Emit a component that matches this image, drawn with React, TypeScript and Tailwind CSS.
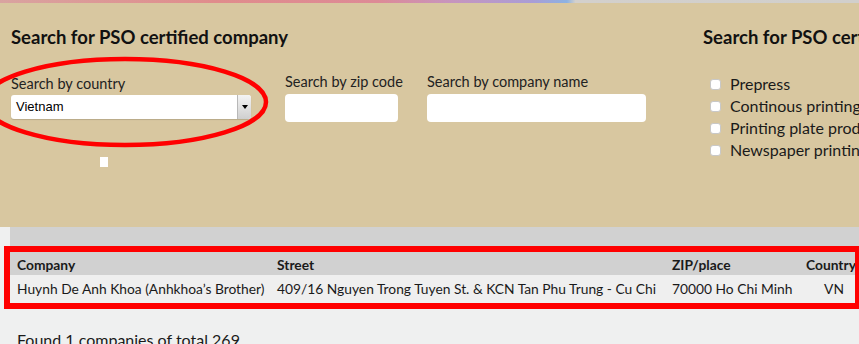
const rows = [
  {
    company: "Huynh De Anh Khoa (Anhkhoa’s Brother)",
    street: "409/16 Nguyen Trong Tuyen St. & KCN Tan Phu Trung - Cu Chi",
    zip: "70000 Ho Chi Minh",
    country: "VN",
  },
];

const processes = [
  "Prepress",
  "Continous printing",
  "Printing plate production",
  "Newspaper printing",
];

function Field({ label, width }: { label: string; width: string }) {
  return (
    <div className={`${width} flex flex-col shrink-0`}>
      <div className="text-[14.5px] leading-[17px] text-[#222] whitespace-nowrap">{label}</div>
      <div className="w-full mt-[4px] h-[28px] rounded-[4px] bg-white" />
    </div>
  );
}

export default function App() {
  return (
    <div
      className="relative w-[859px] h-[344px] overflow-hidden bg-[#eff0f0] text-[#1a1a1a]"
      style={{ fontFamily: "Lato, 'Open Sans', sans-serif" }}
    >
      {/* banner image strip */}
      <div className="h-[3px] bg-[linear-gradient(90deg,#d9a3a0_0%,#e08c8c_25%,#dd8a96_44%,#c894bc_52%,#a99dd6_62%,#8cb2e2_66%,#d3d0cc_67%,#d1cfcc_100%)]" />

      {/* search panel */}
      <div className="h-[224px] bg-[#d8c7a0] flex">
        <div className="w-[692px] shrink-0 pl-[11px] pt-[23px]">
          <h2 className="text-[18.5px] leading-[22px] font-bold text-[#111] whitespace-nowrap">
            Search for PSO certified company
          </h2>
          <div className="flex items-start mt-[25px]">
            <div className="flex flex-col w-[240px] shrink-0 pt-[2px]">
              <div className="text-[14.5px] leading-[17px] text-[#222] whitespace-nowrap">Search by country</div>
              <div className="mt-[3px] h-[24px] rounded-[3px] bg-white flex items-center justify-between shadow-[0_1px_1px_rgba(0,0,0,0.15)]">
                <span
                  className="pl-[5px] text-[13px] text-black"
                  style={{ fontFamily: "'Liberation Sans', Arial, sans-serif" }}
                >
                  Vietnam
                </span>
                <div className="w-[14px] h-[24px] rounded-r-[3px] bg-[linear-gradient(180deg,#f4f4f4,#cfcfcf)] border-l border-[#b8b8b8] flex items-center justify-center">
                  <div className="w-0 h-0 border-l-[3px] border-r-[3px] border-t-[4px] border-l-transparent border-r-transparent border-t-black" />
                </div>
              </div>
              <div className="ml-[89px] mt-[38px] w-[8px] h-[10px] bg-white" />
            </div>
            <div className="ml-[34px] shrink-0">
              <Field label="Search by zip code" width="w-[113px]" />
            </div>
            <div className="ml-[29px] shrink-0">
              <Field label="Search by company name" width="w-[219px]" />
            </div>
          </div>
        </div>

        <div className="pl-[11px] pt-[23px] whitespace-nowrap shrink-0">
          <h2 className="text-[18.5px] leading-[22px] font-bold text-[#111]">
            Search for PSO certified process
          </h2>
          <ul className="mt-[25px] ml-[7px] flex flex-col">
            {processes.map((p) => (
              <li key={p} className="flex items-center h-[22px]">
                <span className="w-[11px] h-[11px] rounded-[3px] bg-white border border-[#c8c8c8]" />
                <span className="ml-[9px] text-[16px] text-[#1a1a1a]">{p}</span>
              </li>
            ))}
          </ul>
        </div>
      </div>

      {/* results */}
      <div className="ml-[10px] h-[19px] bg-[#d1d1d1]" />
      <div className="ml-[4px] w-[857px] border-[6px] border-[#ff0000] overflow-hidden">
        <div className="grid grid-cols-[260px_395px_134px_70px] w-[859px] text-[13.8px]">
          <div className="h-[23px] bg-[#d1d1d1] pl-[7px] pt-[3px] flex items-center font-bold">Company</div>
          <div className="h-[23px] bg-[#d1d1d1] pl-[7px] pt-[3px] flex items-center font-bold">Street</div>
          <div className="h-[23px] bg-[#d1d1d1] pl-[7px] pt-[3px] flex items-center font-bold">ZIP/place</div>
          <div className="h-[23px] bg-[#d1d1d1] pl-[7px] pt-[3px] flex items-center font-bold">Country</div>
          {rows.map((r) => (
            <div key={r.company} className="contents">
              <div className="h-[28px] bg-[#efefef] pl-[7px] flex items-center whitespace-nowrap">{r.company}</div>
              <div className="h-[28px] bg-[#efefef] pl-[7px] flex items-center whitespace-nowrap">{r.street}</div>
              <div className="h-[28px] bg-[#efefef] pl-[7px] flex items-center whitespace-nowrap">{r.zip}</div>
              <div className="h-[28px] bg-[#efefef] flex items-center justify-center">{r.country}</div>
            </div>
          ))}
        </div>
      </div>
      <p className="ml-[17px] mt-[21px] text-[16px] leading-[20px] text-[#1a1a1a] whitespace-nowrap">
        Found 1 companies of total 269
      </p>

      {/* annotation ellipse */}
      <svg className="absolute left-0 top-0 pointer-events-none" width="300" height="160">
        <ellipse cx="125" cy="102" rx="141" ry="43" fill="none" stroke="#ff0000" strokeWidth="4.5" />
      </svg>
    </div>
  );
}
